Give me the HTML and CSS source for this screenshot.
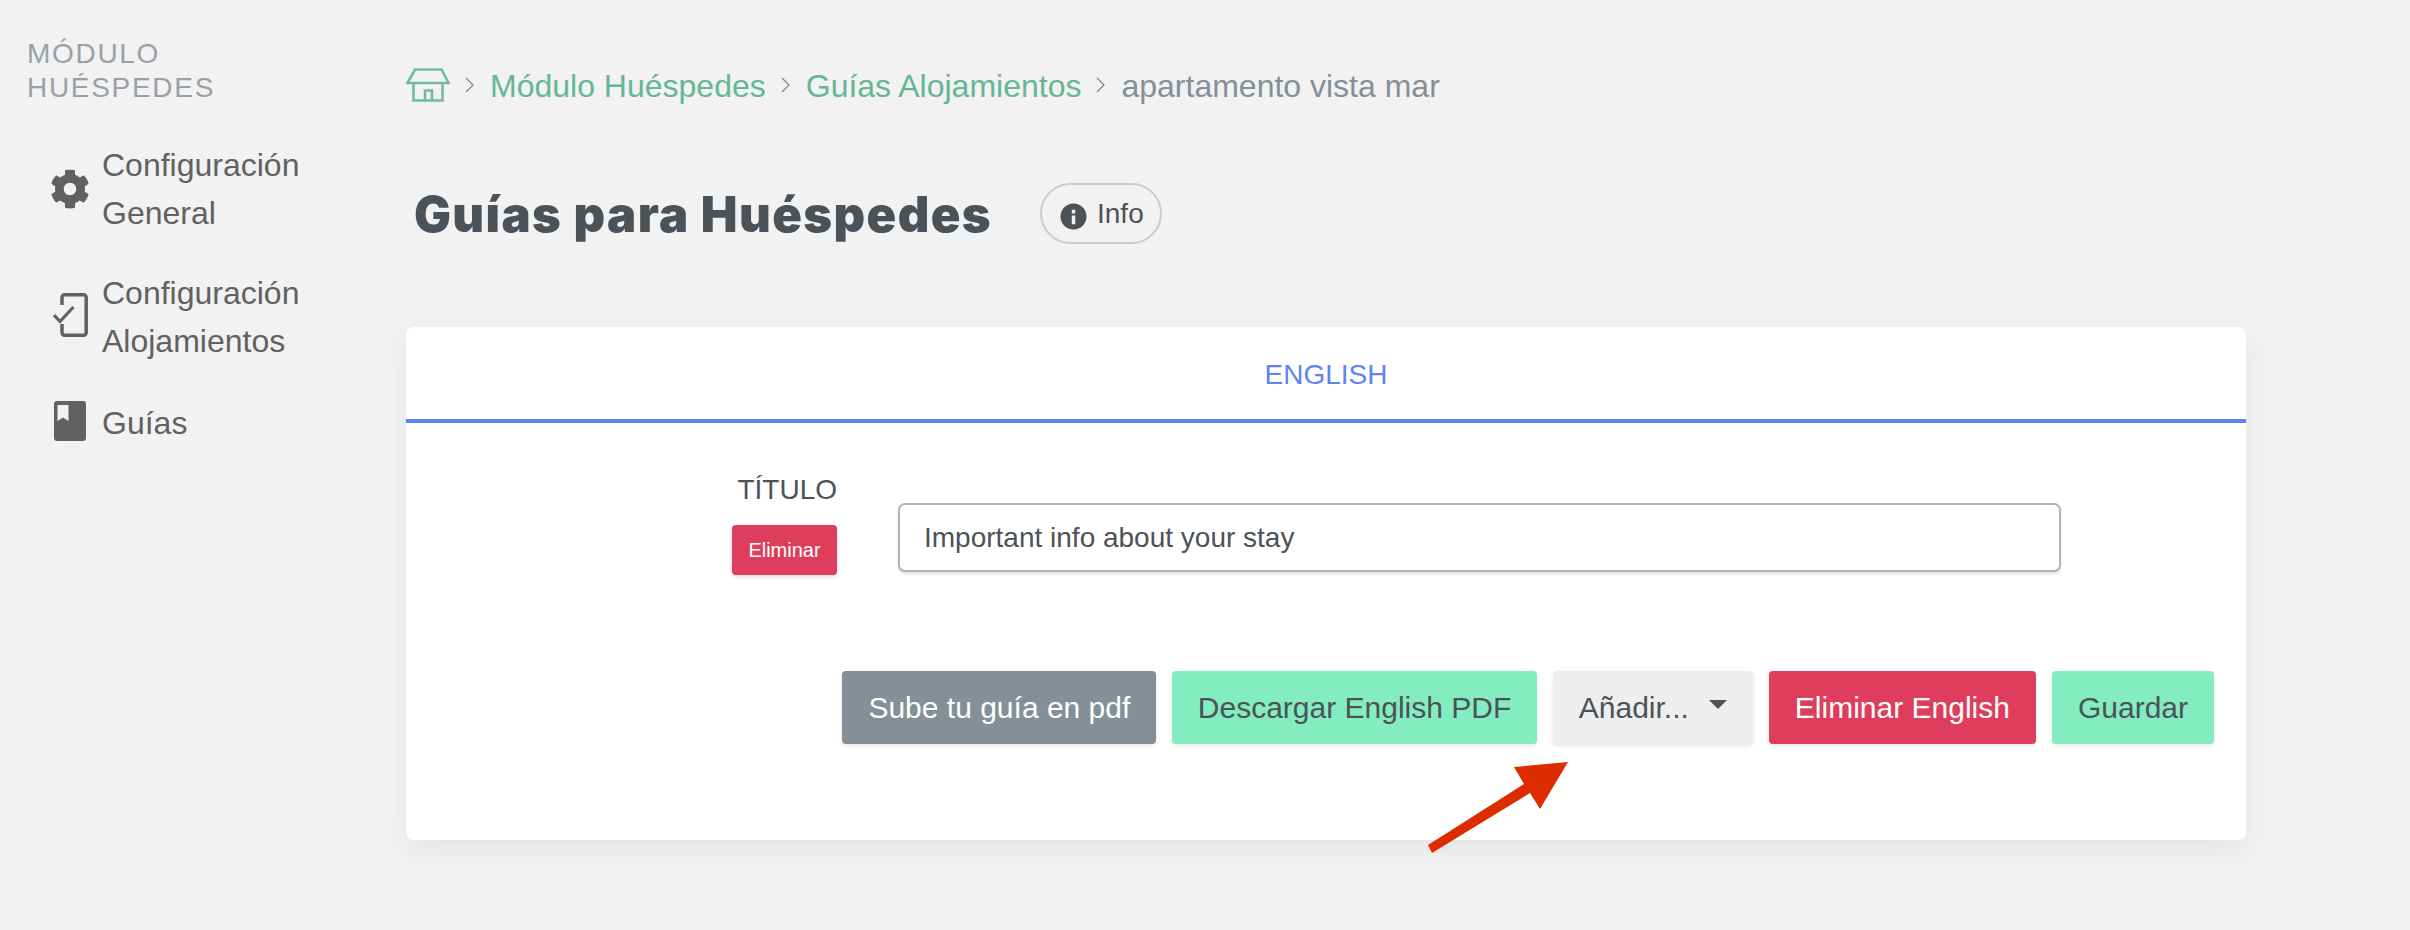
FILE: index.html
```html
<!DOCTYPE html>
<html lang="es">
<head>
<meta charset="utf-8">
<title>Guías para Huéspedes</title>
<link rel="stylesheet" href="styles.css">
</head>
<body>
<div class="app">
  <aside class="sidebar">
    <h2 class="side-title">MÓDULO HUÉSPEDES</h2>
    <nav class="side-nav">
      <a class="side-item">
        <svg class="side-icon" viewBox="0 0 512 512" width="40" height="40"><path fill="#616161" d="M487.4 315.7l-42.6-24.6c4.3-23.2 4.3-47 0-70.2l42.6-24.6c4.9-2.8 7.1-8.6 5.5-14-11.1-35.6-30-67.8-54.7-94.6-3.8-4.1-10-5.1-14.8-2.3L380.8 110c-17.9-15.4-38.5-27.3-60.8-35.1V25.8c0-5.6-3.9-10.5-9.4-11.7-36.7-8.2-74.3-7.8-109.2 0-5.5 1.2-9.4 6.1-9.4 11.7V75c-22.2 7.9-42.8 19.8-60.8 35.1L88.7 85.5c-4.9-2.8-11-1.9-14.8 2.3-24.7 26.7-43.6 58.9-54.7 94.6-1.7 5.4.6 11.2 5.5 14L67.3 221c-4.3 23.2-4.3 47 0 70.2l-42.6 24.6c-4.9 2.8-7.1 8.6-5.5 14 11.1 35.6 30 67.8 54.7 94.6 3.8 4.1 10 5.1 14.8 2.3l42.6-24.6c17.9 15.4 38.5 27.3 60.8 35.1v49.2c0 5.6 3.9 10.5 9.4 11.7 36.7 8.2 74.3 7.8 109.2 0 5.5-1.2 9.4-6.1 9.4-11.7v-49.2c22.2-7.9 42.8-19.8 60.8-35.1l42.6 24.6c4.9 2.8 11 1.9 14.8-2.3 24.7-26.7 43.6-58.9 54.7-94.6 1.5-5.5-.7-11.3-5.6-14.1zM256 336c-44.1 0-80-35.900-80-80s35.900-80 80-80 80 35.900 80 80-35.900 80-80 80z"/></svg>
        <span>Configuración<br>General</span>
      </a>
      <a class="side-item side-item-phone">
        <svg class="side-icon" viewBox="0 0 36 44" width="36" height="44"><path fill="none" stroke="#616161" stroke-width="3.500" d="M9 12V4.500a2.700 2.700 0 0 1 2.700-2.700h18.800a2.700 2.700 0 0 1 2.700 2.700v35a2.700 2.700 0 0 1-2.700 2.700H11.700a2.700 2.700 0 0 1-2.700-2.700V31"/><path fill="none" stroke="#616161" stroke-width="3.200" d="M1 22l6 6.500L20.500 14"/></svg>
        <span>Configuración<br>Alojamientos</span>
      </a>
      <a class="side-item side-item-single">
        <svg class="side-icon" viewBox="0 0 32 40" width="32" height="40"><path fill="#616161" fill-rule="evenodd" d="M3 0h26a3 3 0 0 1 3 3v34a3 3 0 0 1-3 3H3a3 3 0 0 1-3-3V3a3 3 0 0 1 3-3zm.500 4V20L9 16.500 14.500 20V4z"/></svg>
        <span>Guías</span>
      </a>
    </nav>
  </aside>
  <main class="main">
    <nav class="crumbs">
      <svg class="crumb-home" viewBox="0 0 44 34" width="44" height="34"><path fill="none" stroke="#6fbd9e" stroke-width="2.600" d="M9 1.500H35.500L42.500 15H1.500zM7.500 15V32.500H36.500V15M19 32.500V22.500H26V32.500"/></svg>
      <svg class="crumb-sep" viewBox="0 0 9 16" width="9" height="16"><path fill="none" stroke="#7d858c" stroke-width="1.200" d="M1 1l7 7-7 7"/></svg>
      <a class="crumb-link">Módulo Huéspedes</a>
      <svg class="crumb-sep" viewBox="0 0 9 16" width="9" height="16"><path fill="none" stroke="#7d858c" stroke-width="1.200" d="M1 1l7 7-7 7"/></svg>
      <a class="crumb-link">Guías Alojamientos</a>
      <svg class="crumb-sep" viewBox="0 0 9 16" width="9" height="16"><path fill="none" stroke="#7d858c" stroke-width="1.200" d="M1 1l7 7-7 7"/></svg>
      <span class="crumb-current">apartamento vista mar</span>
    </nav>
    <header class="page-head">
      <h1 class="page-title">Guías para Huéspedes</h1>
      <button class="info-pill">
        <svg class="info-icon" viewBox="0 0 28 28" width="27" height="27"><path fill="#4b5258" fill-rule="evenodd" d="M14 .5a13.500 13.500 0 1 1 0 27a13.500 13.500 0 0 1 0-27zM12.200 7v4h3.600V7zM12.200 13v9h3.600v-9z"/></svg>
        Info
      </button>
    </header>
    <section class="card">
      <div class="tab">ENGLISH</div>
      <div class="field">
        <div class="field-label">
          <label>TÍTULO</label>
          <button class="btn-small">Eliminar</button>
        </div>
        <input class="text-input" type="text" value="Important info about your stay">
      </div>
      <div class="actions">
        <button class="btn btn-grey">Sube tu guía en pdf</button>
        <button class="btn btn-green btn-download">Descargar English PDF</button>
        <button class="btn btn-light">Añadir...<i class="caret"></i></button>
        <button class="btn btn-red">Eliminar English</button>
        <button class="btn btn-green">Guardar</button>
      </div>
    </section>
  </main>
  <svg class="arrow" viewBox="0 0 150 100" width="150" height="100"><polygon fill="#dc2c00" points="148,2 94,7 104,24 8,85 12,93 110,33 120,49"/></svg>
</div>
</body>
</html>
```

FILE: styles.css
```css
* { box-sizing: border-box; }
html, body { margin: 0; padding: 0; }
body {
  background: #f2f2f2;
  font-family: "Liberation Sans", Arial, sans-serif;
  color: #4b5258;
  overflow: hidden;
}
.app {
  position: relative;
  display: flex;
  width: 2410px;
  height: 930px;
}
.sidebar {
  width: 406px;
  flex: none;
  padding: 37px 0 0 27px;
}
.side-title {
  margin: 0;
  width: 240px;
  font-size: 28px;
  line-height: 34px;
  font-weight: 400;
  letter-spacing: 1.7px;
  color: #98a1a9;
}
.side-nav {
  display: flex;
  flex-direction: column;
  margin-top: 36px;
  gap: 32px;
}
.side-item {
  display: flex;
  align-items: center;
  font-size: 32px;
  line-height: 48px;
  color: #616161;
  padding-left: 23px;
}
.side-item span { margin-left: 12px; }
.side-item-phone .side-icon { margin: -4px 1px 0 3px; }
.side-item-single { margin-top: 2px; }
.side-item-single .side-icon { margin: -4px 4px 0 4px; }
.side-icon { flex: none; display: block; }
.main {
  width: 1840px;
  flex: none;
  padding-top: 68px;
}
.crumbs {
  display: flex;
  align-items: center;
  height: 34px;
  font-size: 32px;
}
.crumb-home { margin-right: 15px; }
.crumb-sep { margin-right: 16px; }
.crumb-link { color: #64b795; margin-right: 15px; padding-top: 2px; }
.crumb-current { color: #858f98; padding-top: 2px; }
.page-head {
  display: flex;
  align-items: center;
  margin-top: 81px;
  padding-left: 8px;
  height: 61px;
}
.page-title {
  margin: 2px 0 0;
  font-family: Inter, "Liberation Sans", sans-serif;
  font-weight: 900;
  font-size: 49px;
  letter-spacing: 1.400px;
  color: #4b5258;
  width: 626px;
  white-space: nowrap;
}
.info-pill {
  display: flex;
  align-items: center;
  gap: 10px;
  height: 61px;
  width: 122px;
  padding: 0 0 0 18px;
  border: 2px solid #ccc;
  border-radius: 31px;
  background: transparent;
  font: 28px "Liberation Sans", Arial, sans-serif;
  color: #4b5258;
}
.info-icon { margin-top: 6px; }
.card {
  margin-top: 83px;
  height: 513px;
  background: #fff;
  border-radius: 8px;
  box-shadow: 0 10px 30px rgba(0, 0, 0, 0.06);
}
.tab {
  height: 96px;
  border-bottom: 4px solid #5f84ee;
  color: #5f84ee;
  font-size: 28px;
  line-height: 96px;
  text-align: center;
}
.field {
  display: flex;
  margin-top: 50px;
  padding-left: 326px;
}
.field-label {
  width: 105px;
  display: flex;
  flex-direction: column;
  align-items: flex-end;
}
.field-label label {
  font-size: 28px;
  line-height: 34px;
  height: 52px;
}
.btn-small {
  width: 105px;
  height: 50px;
  padding: 0;
  border: 0;
  border-radius: 4px;
  background: #de3e5c;
  color: #fff;
  font: 20px "Liberation Sans", Arial, sans-serif;
  box-shadow: 0 2px 4px rgba(0, 0, 0, 0.15);
}
.text-input {
  width: 1163px;
  height: 69px;
  margin: 30px 0 0 61px;
  padding: 0 24px;
  border: 2px solid #adb5bd;
  border-radius: 7px;
  background: #fff;
  font: 28px "Liberation Sans", Arial, sans-serif;
  color: #4b5258;
  box-shadow: 0 2px 3px rgba(0, 0, 0, 0.12);
  outline: none;
}
.actions {
  display: flex;
  justify-content: flex-end;
  gap: 16px;
  margin-top: 96px;
  padding-right: 32px;
}
.btn {
  display: flex;
  align-items: center;
  height: 73px;
  padding: 0 26px;
  border: 0;
  border-radius: 4px;
  font: 30px "Liberation Sans", Arial, sans-serif;
  color: #4b5258;
  box-shadow: 0 2px 4px rgba(0, 0, 0, 0.1);
}
.btn-grey { background: #858f98; color: #fff; }
.btn-green { background: #84ecc1; }
.btn-download { padding: 0 25.500px; }
.btn-light { background: #eee; }
.btn-red { background: #de3e5c; color: #fff; }
.caret {
  width: 0;
  height: 0;
  margin: -6px 0 0 20px;
  border-left: 9px solid transparent;
  border-right: 9px solid transparent;
  border-top: 9px solid #4b5258;
}
.arrow {
  position: absolute;
  left: 1420px;
  top: 760px;
}
```
